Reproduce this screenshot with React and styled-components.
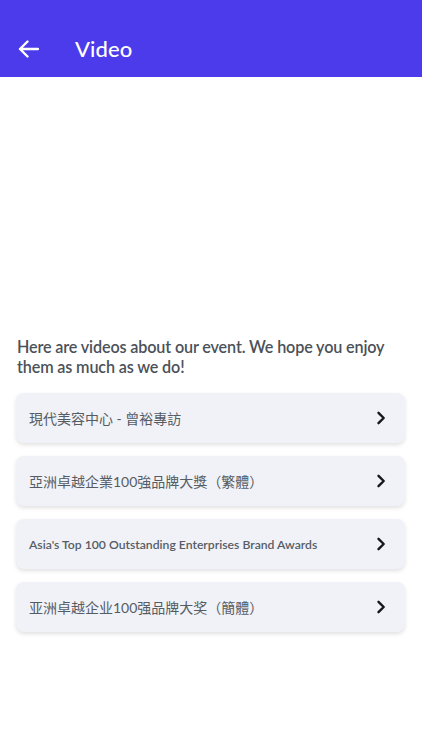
import React from "react";
import styled, { createGlobalStyle } from "styled-components";

const Global = createGlobalStyle`
  * { box-sizing: border-box; }
  html, body { margin: 0; padding: 0; background: #ffffff; }
  body { font-family: "Lato", "Noto Sans CJK TC", sans-serif; }
`;

const Page = styled.div`
  width: 422px;
  min-height: 750px;
  display: flex;
  flex-direction: column;
  background: #fff;
`;

const Header = styled.header`
  height: 77px;
  background: #4b3bea;
  display: flex;
  align-items: center;
  padding: 20px 0 0 18px;
  gap: 36px;
`;

const BackButton = styled.button`
  border: 0;
  background: transparent;
  padding: 0;
  width: 21px;
  height: 21px;
  display: flex;
  align-items: center;
  justify-content: center;
  color: #fff;
`;

const Title = styled.h1`
  margin: 0;
  font-family: "Lato", sans-serif;
  font-weight: 500;
  font-size: 22px;
  color: #ffffff;
  letter-spacing: 0.1px;
`;

const Player = styled.div`
  height: 260px;
  background: #ffffff;
`;

const Content = styled.main`
  padding: 0 17px;
  display: flex;
  flex-direction: column;
  gap: 13px;
`;

const Intro = styled.p`
  margin: 0 0 3px 0;
  font-family: "Lato", sans-serif;
  font-weight: 600;
  font-size: 16.2px;
  letter-spacing: -0.15px;
  line-height: 20px;
  color: #4b5159;
`;

const Card = styled.button`
  width: 389px;
  margin-left: -1px;
  height: 50px;
  border: 0;
  border-radius: 8px;
  background: #f0f2f7;
  box-shadow: 0 2px 4px rgba(0, 0, 0, 0.12);
  display: flex;
  align-items: center;
  justify-content: space-between;
  padding: 0 18px 0 13px;
  text-align: left;
  cursor: pointer;
`;

const CardLabel = styled.span`
  font-family: "Lato", "Noto Sans CJK TC", sans-serif;
  font-weight: ${(p) => (p.$latin ? 600 : 400)};
  font-size: ${(p) => (p.$latin ? "12.2px" : "14px")};
  color: #565c64;
`;

const Chevron = () => (
  <svg width="12" height="14" viewBox="0 0 12 14" fill="none">
    <path d="M3.5 1.8 L8.7 7 L3.5 12.2" stroke="#15171a" strokeWidth="2.4" strokeLinecap="round" strokeLinejoin="round" />
  </svg>
);

const videos = [
  { label: "現代美容中心 - 曾裕專訪" },
  { label: "亞洲卓越企業100強品牌大獎（繁體）" },
  { label: "Asia's Top 100 Outstanding Enterprises Brand Awards", latin: true },
  { label: "亚洲卓越企业100强品牌大奖（簡體）" },
];

export default function App() {
  return (
    <Page>
      <Global />
      <Header>
        <BackButton aria-label="Back">
          <svg width="21" height="18" viewBox="0 0 21 18" fill="none">
            <path d="M20 9 H2 M9.5 1.5 L2 9 L9.5 16.5" stroke="#fff" strokeWidth="2.4" strokeLinecap="round" strokeLinejoin="round" />
          </svg>
        </BackButton>
        <Title>Video</Title>
      </Header>
      <Player />
      <Content>
        <Intro>Here are videos about our event. We hope you enjoy them as much as we do!</Intro>
        {videos.map((v) => (
          <Card key={v.label}>
            <CardLabel $latin={v.latin}>{v.label}</CardLabel>
            <Chevron />
          </Card>
        ))}
      </Content>
    </Page>
  );
}
